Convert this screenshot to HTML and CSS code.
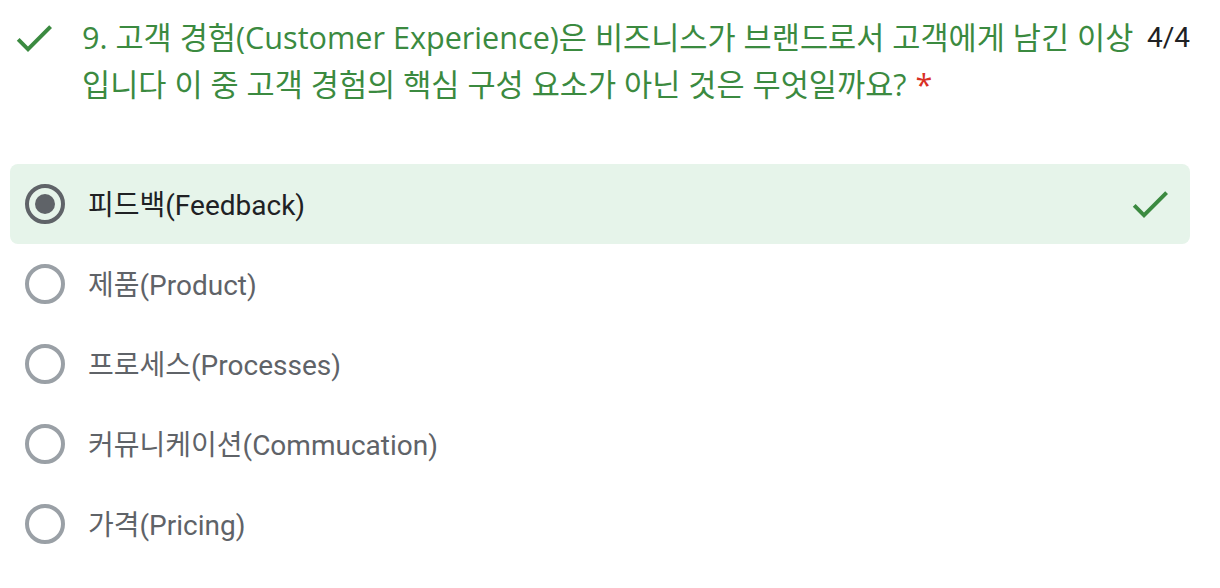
FILE: index.html
```html
<!DOCTYPE html>
<html lang="ko">
<head>
<meta charset="utf-8">
<title>Quiz</title>
<link rel="stylesheet" href="styles.css">
</head>
<body>
<div class="question">
  <div class="header">
    <svg class="status-icon" viewBox="0 0 24 24" width="48" height="48"><path d="M9 16.2L4.8 12l-1.4 1.4L9 19 21 7l-1.4-1.4L9 16.2z"/></svg>
    <div class="title">9. 고객 경험(Customer Experience)은 비즈니스가 브랜드로서 고객에게 남긴 이상 입니다 이 중 고객 경험의 핵심 구성 요소가 아닌 것은 무엇일까요?<span class="req">*</span></div>
    <div class="points">4/4</div>
  </div>
  <div class="options">
    <div class="option selected">
      <span class="radio checked"></span>
      <span class="label">피드백(Feedback)</span>
      <svg class="ok-icon" viewBox="0 0 24 24" width="48" height="48"><path d="M9 16.2L4.8 12l-1.4 1.4L9 19 21 7l-1.4-1.4L9 16.2z"/></svg>
    </div>
    <div class="option">
      <span class="radio"></span>
      <span class="label">제품(Product)</span>
    </div>
    <div class="option">
      <span class="radio"></span>
      <span class="label">프로세스(Processes)</span>
    </div>
    <div class="option">
      <span class="radio"></span>
      <span class="label">커뮤니케이션(Commucation)</span>
    </div>
    <div class="option">
      <span class="radio"></span>
      <span class="label">가격(Pricing)</span>
    </div>
  </div>
</div>
</body>
</html>
```

FILE: styles.css
```css
html, body {
  margin: 0;
  padding: 0;
  background: #ffffff;
}
body {
  font-family: Roboto, "Noto Sans CJK KR", sans-serif;
  color: #202124;
}
.question {
  width: 1220px;
  padding-top: 14px;
}
.header {
  display: flex;
  align-items: flex-start;
  padding-left: 10px;
  padding-right: 30px;
}
.status-icon {
  flex: none;
  fill: #3b8a40;
}
.title {
  flex: 1;
  margin-left: 24px;
  font-size: 30.6px;
  line-height: 47px;
  color: #3b8a40;
  font-family: "Open Sans", "Noto Sans CJK KR", sans-serif;
  word-break: keep-all;
}
.req {
  color: #d93025;
  margin-left: 9px;
}
.points {
  flex: none;
  margin-left: 10px;
  font-size: 28px;
  line-height: 48px;
  color: #202124;
}
.options {
  margin-top: 56px;
  padding: 0 30px 0 10px;
}
.option {
  display: flex;
  align-items: center;
  height: 80px;
  padding-left: 15px;
  padding-right: 16px;
  border-radius: 8px;
}
.option.selected {
  background: #e6f4ea;
}
.radio {
  flex: none;
  box-sizing: border-box;
  width: 40px;
  height: 40px;
  border-radius: 50%;
  border: 4px solid #9aa0a6;
  display: flex;
  align-items: center;
  justify-content: center;
}
.radio.checked {
  border-color: #5f6368;
}
.radio.checked::after {
  content: "";
  width: 20px;
  height: 20px;
  border-radius: 50%;
  background: #5f6368;
}
.label {
  flex: 1;
  margin-left: 23px;
  padding-top: 4px;
  font-size: 28px;
  line-height: 36px;
  color: #5f6368;
}
.option.selected .label {
  color: #202124;
}
.ok-icon {
  flex: none;
  fill: #3b8a40;
}
```
